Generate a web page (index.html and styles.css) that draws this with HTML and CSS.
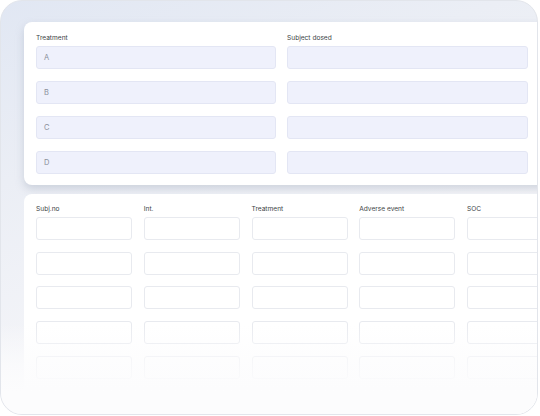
FILE: index.html
```html
<!DOCTYPE html>
<html>
<head>
<meta charset="utf-8">
<link rel="stylesheet" href="styles.css">
</head>
<body>
<div class="frame">
  <section class="card card-top">
    <div class="col">
      <div class="label">Treatment</div>
      <div class="fields">
        <div class="fill">A</div>
        <div class="fill">B</div>
        <div class="fill">C</div>
        <div class="fill">D</div>
      </div>
    </div>
    <div class="col">
      <div class="label">Subject dosed</div>
      <div class="fields">
        <div class="fill"></div>
        <div class="fill"></div>
        <div class="fill"></div>
        <div class="fill"></div>
      </div>
    </div>
  </section>
  <section class="card card-bottom">
    <div class="tcol">
      <div class="label">Subj.no</div>
      <div class="tfields"><div class="box"></div><div class="box"></div><div class="box"></div><div class="box"></div><div class="box"></div></div>
    </div>
    <div class="tcol">
      <div class="label">Int.</div>
      <div class="tfields"><div class="box"></div><div class="box"></div><div class="box"></div><div class="box"></div><div class="box"></div></div>
    </div>
    <div class="tcol">
      <div class="label">Treatment</div>
      <div class="tfields"><div class="box"></div><div class="box"></div><div class="box"></div><div class="box"></div><div class="box"></div></div>
    </div>
    <div class="tcol">
      <div class="label">Adverse event</div>
      <div class="tfields"><div class="box"></div><div class="box"></div><div class="box"></div><div class="box"></div><div class="box"></div></div>
    </div>
    <div class="tcol">
      <div class="label">SOC</div>
      <div class="tfields"><div class="box"></div><div class="box"></div><div class="box"></div><div class="box"></div><div class="box"></div></div>
    </div>
  </section>
  <div class="fade"></div>
</div>
</body>
</html>
```
FILE: styles.css
```css
html, body {
  margin: 0;
  padding: 0;
  background: #ffffff;
  width: 540px;
  height: 416px;
  overflow: hidden;
}
body {
  font-family: Inter, "Noto Sans", sans-serif;
}
.frame {
  position: relative;
  box-sizing: border-box;
  width: 538px;
  height: 415px;
  border: 1px solid #e2e5eb;
  border-radius: 22px;
  overflow: hidden;
  padding: 21px 0 0 23px;
  background: linear-gradient(160deg, #e1e7f3 0%, #ebeef5 30%, #f3f4f8 60%, #fbfbfc 100%);
  display: flex;
  flex-direction: column;
  gap: 9px;
}
.card {
  background: #ffffff;
  border-radius: 8px 0 0 8px;
  width: 530px;
  box-sizing: border-box;
  flex-shrink: 0;
}
.card-top {
  display: flex;
  gap: 11px;
  padding: 12px 0 11px 12px;
  box-shadow: 0 4px 8px rgba(150, 160, 180, 0.38);
}
.card-top .col {
  width: 240px;
  display: flex;
  flex-direction: column;
}
.card-top .col + .col {
  width: 241px;
}
.label {
  font-size: 6.6px;
  line-height: 8px;
  color: #3c3f46;
  margin-bottom: 4px;
  height: 8px;
}
.fields {
  display: flex;
  flex-direction: column;
  gap: 12px;
}
.fill {
  box-sizing: border-box;
  height: 23px;
  background: #eff1fc;
  border: 1px solid #e3e6f4;
  border-radius: 3px;
  font-size: 7.5px;
  color: #8b909b;
  display: flex;
  align-items: center;
  padding-left: 7px;
}
.card-bottom {
  flex: 1;
  display: flex;
  gap: 11.75px;
  padding: 11px 0 0 12px;
  border-radius: 8px 0 0 0;
}
.tcol {
  width: 96px;
  flex-shrink: 0;
  display: flex;
  flex-direction: column;
}
.tfields {
  display: flex;
  flex-direction: column;
  gap: 11.7px;
}
.box {
  box-sizing: border-box;
  height: 23px;
  background: #ffffff;
  border: 1px solid #e8eaef;
  border-radius: 3px;
}
.fade {
  position: absolute;
  left: 0;
  right: 0;
  bottom: 0;
  height: 90px;
  background: linear-gradient(180deg, rgba(252, 252, 253, 0) 0%, rgba(252, 252, 253, 0.75) 45%, rgba(252, 252, 253, 1) 75%);
  pointer-events: none;
}
```
